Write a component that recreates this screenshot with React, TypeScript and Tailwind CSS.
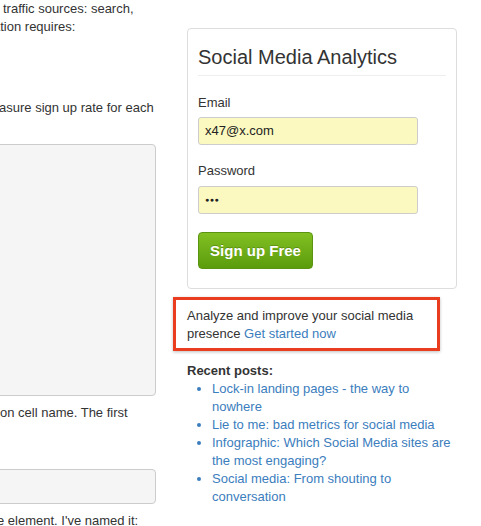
export default function App() {
  const posts = [
    "Lock-in landing pages - the way to nowhere",
    "Lie to me: bad metrics for social media",
    "Infographic: Which Social Media sites are the most engaging?",
    "Social media: From shouting to conversation",
  ];
  return (
    <div className="w-[481px] h-[526px] overflow-hidden bg-white text-[13px] leading-[18px] text-[#333] font-['Liberation_Sans',Arial,sans-serif] flex">
      {/* left article column, clipped at the window edge */}
      <div className="w-[170px] shrink-0 overflow-hidden">
        <div className="whitespace-nowrap pl-[3px]">traffic sources: search,</div>
        <div className="whitespace-nowrap -ml-[7px]">ation requires:</div>
        <div className="whitespace-nowrap mt-[63px] -ml-[1px]">asure sign up rate for each</div>
        <div className="mt-[27px] -ml-[10px] w-[166px] h-[252px] bg-[#f5f5f5] border border-[#ccc] rounded-[4px]" />
        <div className="whitespace-nowrap mt-[8px]">on cell name. The first</div>
        <div className="mt-[47px] -ml-[10px] w-[166px] h-[35px] bg-[#f5f5f5] border border-[#ccc] rounded-[4px]" />
        <div className="whitespace-nowrap mt-[8px] -ml-[3px]">e element. I've named it:</div>
      </div>

      {/* sidebar */}
      <div className="ml-[17px] w-[270px] shrink-0 pt-[28px]">
        <div className="border border-[#ddd] rounded-[4px] px-[10px] pt-[16px] pb-[19px]">
          <h3 className="text-[20px] leading-[24px] text-[#333] pb-[6px] border-b border-[#eee]">
            Social Media Analytics
          </h3>
          <label className="block mt-[18px] mb-[5px]">Email</label>
          <div className="w-[220px] h-[28px] bg-[#fbf9bf] border border-[#ccc] rounded-[3px] px-[6px] flex items-center text-[#222]">
            x47@x.com
          </div>
          <label className="block mt-[17px] mb-[6px]">Password</label>
          <div className="w-[220px] h-[28px] bg-[#fbf9bf] border border-[#ccc] rounded-[3px] px-[6px] flex items-center text-[#222] text-[7px] tracking-[0.5px]">
            ●●●
          </div>
          <button className="mt-[18px] w-[115px] h-[37px] rounded-[4px] border border-[#5a9410] bg-gradient-to-b from-[#82c022] to-[#5b9c0c] text-white text-[15px] font-bold [text-shadow:0_-1px_0_rgba(0,0,0,0.2)]">
            Sign up Free
          </button>
        </div>

        <div className="mt-[8px] -ml-[14px] w-[267px] border-[3px] border-[#ea3d1f] pl-[11px] pt-[7px] pb-[5px] shadow-[0_1px_3px_rgba(0,0,0,0.25)]">
          Analyze and improve your social media presence{" "}
          <a className="text-[#3b7dbd]">Get started now</a>
        </div>

        <div className="mt-[11px] font-bold">Recent posts:</div>
        <ul className="list-disc pl-[25px]">
          {posts.map((p) => (
            <li key={p} className="text-[#3b7dbd]">
              <a>{p}</a>
            </li>
          ))}
        </ul>
      </div>
    </div>
  );
}
